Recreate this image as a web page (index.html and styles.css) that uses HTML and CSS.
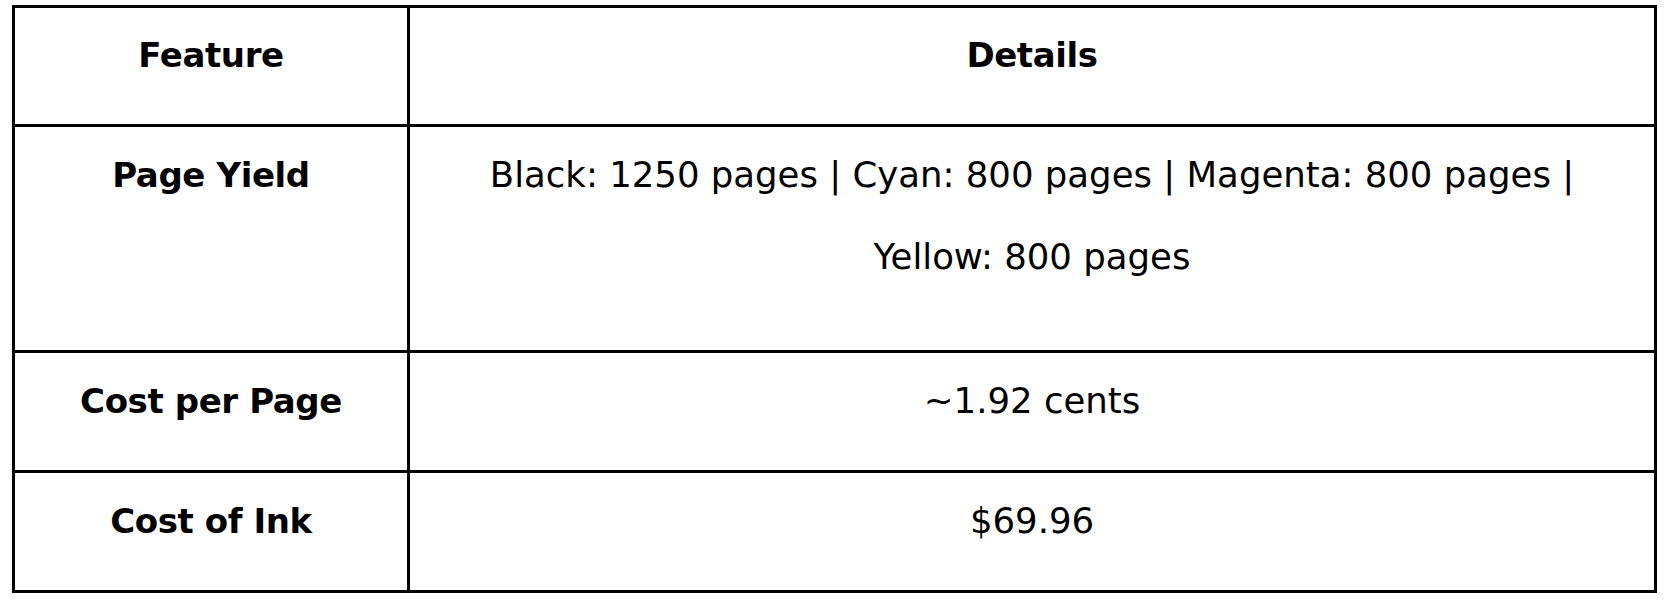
FILE: index.html
```html
<!DOCTYPE html>
<html lang="en">
<head>
<meta charset="utf-8">
<title>Ink Cost Table</title>
<link rel="stylesheet" href="styles.css">
</head>
<body>
<table class="spec-table">
  <thead>
    <tr>
      <th class="col-feature">Feature</th>
      <th class="col-details">Details</th>
    </tr>
  </thead>
  <tbody>
    <tr>
      <th class="col-feature">Page Yield</th>
      <td class="col-details tall">Black: 1250 pages | Cyan: 800 pages | Magenta: 800 pages | Yellow: 800 pages</td>
    </tr>
    <tr>
      <th class="col-feature">Cost per Page</th>
      <td class="col-details">~1.92 cents</td>
    </tr>
    <tr>
      <th class="col-feature">Cost of Ink</th>
      <td class="col-details">$69.96</td>
    </tr>
  </tbody>
</table>
</body>
</html>
```
FILE: styles.css
```css
html, body {
  margin: 0;
  padding: 0;
  background: #ffffff;
}

body {
  padding: 5px 0 0 12px;
  font-family: "DejaVu Sans", "Noto Sans", "Liberation Sans", sans-serif;
  color: #000000;
}

.spec-table {
  border-collapse: separate;
  border-spacing: 0;
  border: 3px solid #000000;
  width: 1645px;
  table-layout: fixed;
}

.spec-table th,
.spec-table td {
  font-size: 35.5px;
  line-height: 82px;
  text-align: center;
  vertical-align: top;
  padding: 7px 40px 28px;
}

.spec-table thead th {
  padding-top: 6px;
  padding-bottom: 28px;
}

.spec-table tbody th,
.spec-table tbody td {
  border-top: 3px solid #000000;
}

.spec-table th {
  font-size: 34px;
  font-weight: 700;
  letter-spacing: -0.4px;
}

.spec-table td {
  font-weight: 400;
}

.col-feature {
  width: 312px;
  border-right: 3px solid #000000;
}

.col-details.tall {
  padding-bottom: 52px;
}
```
